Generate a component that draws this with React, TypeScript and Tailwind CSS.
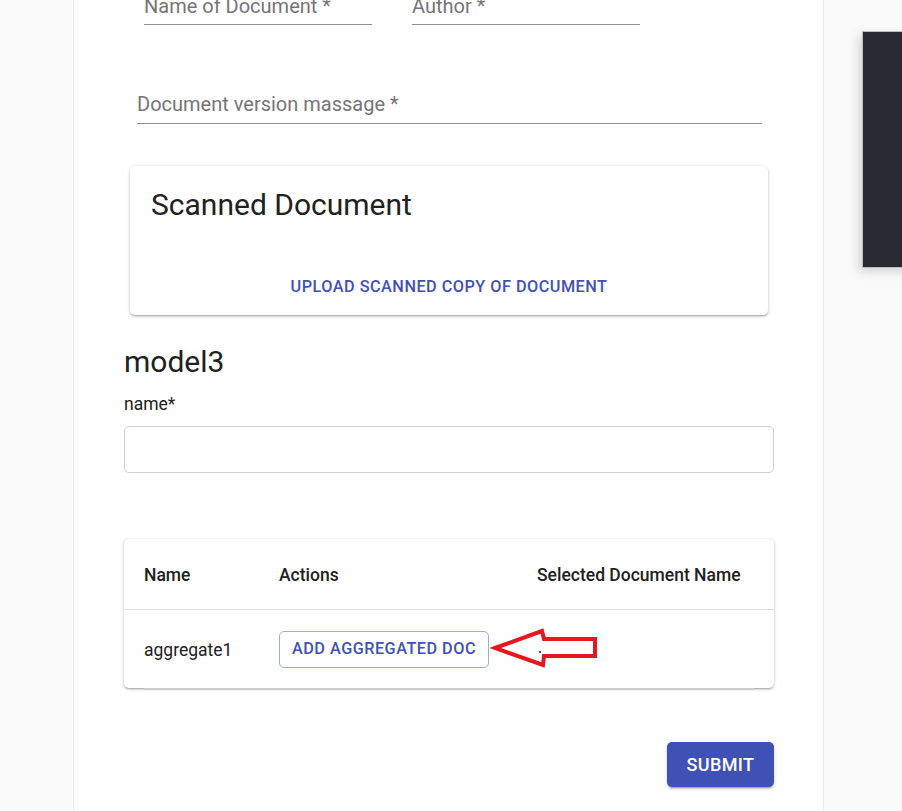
import { useState } from 'react'

const font = { fontFamily: 'Roboto, "Noto Sans", Arial, sans-serif' }

function LineField({ label, className }: { label: string; className: string }) {
  return (
    <div className={`border-b border-[#8f8f8f] ${className}`}>
      <span className="block text-[20px] leading-[20px] text-[#757575]">{label}</span>
    </div>
  )
}

function Arrow() {
  return (
    <svg
      className="absolute left-[366px] top-[15px]"
      width="112"
      height="46"
      viewBox="0 0 112 46"
    >
      <polygon
        points="5,23 52,6 54,14 105,14 105,31 54,31 53,40"
        fill="white"
        stroke="#e8161e"
        strokeWidth="4"
        strokeLinejoin="miter"
      />
      <rect x="49" y="26" width="2" height="2" fill="#6b4a2a" />
    </svg>
  )
}

export default function App() {
  const [name, setName] = useState('')

  return (
    <div className="relative min-h-[811px] overflow-hidden bg-[#fafafa]" style={font}>
      <div className="ml-[73px] min-h-[811px] w-[751px] border-x border-[#ececec] bg-white pl-[50px] pr-[49px]">
        {/* top fields, scrolled half out of view */}
        <div className="flex gap-[40px] pl-[20px]">
          <LineField label="Name of Document *" className="h-[25px] w-[228px] [&>span]:-mt-[4px]" />
          <LineField label="Author *" className="h-[25px] w-[228px] [&>span]:-mt-[4px]" />
        </div>

        <LineField
          label="Document version massage *"
          className="ml-[13px] mt-[69px] h-[30px] w-[625px]"
        />

        <div className="ml-[6px] mt-[42px] h-[149px] w-[638px] rounded-[5px] bg-white pt-[21px] shadow-[0_2px_2px_-1px_rgba(0,0,0,0.2),0_1px_3px_0_rgba(0,0,0,0.14),0_1px_4px_0_rgba(0,0,0,0.12)]">
          <h2 className="pl-[21px] text-[30px] leading-[36px] font-normal text-[#212121]">
            Scanned Document
          </h2>
          <div className="mt-[53px] text-center text-[16.25px] leading-[21px] font-medium tracking-[0.03em] text-[#3f51b5] uppercase">
            Upload scanned copy of document
          </div>
        </div>

        <h3 className="mt-[29px] text-[30px] leading-[36px] font-normal text-[#212121]">model3</h3>
        <label className="mt-[14px] block text-[17.5px] leading-[21px] text-[#212121]">name*</label>
        <input
          value={name}
          onChange={(e) => setName(e.target.value)}
          className="mt-[11px] block h-[47px] w-[650px] rounded-[5px] border border-[#cfcfcf] px-3 text-[17.5px] outline-none"
        />

        <div className="mt-[66px] w-[650px] rounded-[5px] bg-white shadow-[0_2px_2px_-1px_rgba(0,0,0,0.2),0_1px_3px_0_rgba(0,0,0,0.14),0_1px_4px_0_rgba(0,0,0,0.12)]">
          <div className="grid h-[71px] grid-cols-[135px_258px_1fr] items-center border-b border-[#e0e0e0] pl-[20px] pt-[2px] text-[17.5px] leading-[21px] font-medium text-[#212121]">
            <span>Name</span>
            <span>Actions</span>
            <span>Selected Document Name</span>
          </div>
          <div className="relative grid h-[78px] grid-cols-[135px_258px_1fr] items-center pl-[20px] text-[17.5px] leading-[21px] text-[#212121]">
            <span className="pt-[3px]">aggregate1</span>
            <span>
              <button className="h-[37px] rounded-[5px] border border-[#a3aadb] px-[12px] text-[16.25px] leading-[20px] font-medium tracking-[0.03em] text-[#3f51b5] uppercase">
                Add aggregated doc
              </button>
            </span>
            <span />
            <Arrow />
          </div>
        </div>
        <div className="mx-[20px] h-[2px] w-[610px] bg-[#cdcdcd]" />

        <div className="mt-[52px] flex w-[650px] justify-end">
          <button className="h-[45px] w-[107px] rounded-[5px] bg-[#3f51b5] text-[18px] font-medium tracking-[0.02em] text-white uppercase shadow-[0_3px_1px_-2px_rgba(0,0,0,0.2),0_2px_2px_0_rgba(0,0,0,0.14),0_1px_5px_0_rgba(0,0,0,0.12)]">
            Submit
          </button>
        </div>
      </div>

      {/* side drawer peeking in from the right */}
      <div className="absolute left-[862px] top-[31px] h-[237px] w-[60px] border border-[#bdbdbd] bg-[#2a2a33] shadow-[-4px_4px_10px_rgba(0,0,0,0.15)]" />
    </div>
  )
}
